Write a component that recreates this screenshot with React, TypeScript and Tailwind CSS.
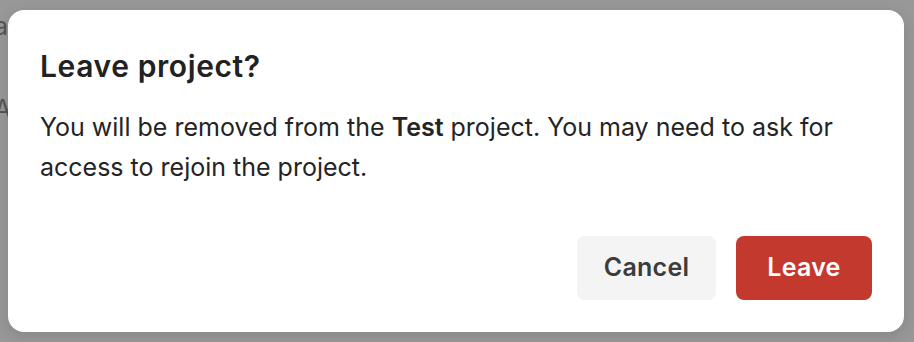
export default function App() {
  return (
    <div
      className="relative h-[342px] w-[914px] overflow-hidden bg-[#989898]"
      style={{ fontFamily: "Inter, 'Noto Sans', sans-serif" }}
    >
      {/* dimmed page behind the dialog */}
      <div className="absolute left-[-6px] top-[10px] flex flex-col gap-[51px] text-[25px] leading-[32px] text-[#555555]">
        <span>a</span>
        <span>A</span>
      </div>

      {/* dialog */}
      <div className="absolute left-2 top-[10px] flex h-[322px] w-[896px] flex-col rounded-[16px] bg-white px-8 pt-[38px] pb-8 shadow-[0_4px_16px_rgba(0,0,0,0.12)]">
        <h2 className="text-[30px] font-semibold leading-[36px] tracking-[0.02em] text-[#222222]">
          Leave project?
        </h2>
        <p className="mt-[23px] text-[25px] leading-[40px] text-[#242424]">
          You will be removed from the <span className="font-semibold">Test</span> project. You may need to ask for
          access to rejoin the project.
        </p>
        <div className="mt-auto flex justify-end gap-5">
          <button className="h-16 w-[139px] rounded-lg bg-[#f4f4f4] text-[25px] font-semibold tracking-[0.01em] text-[#3c3c3c]">
            Cancel
          </button>
          <button className="h-16 w-[136px] rounded-lg bg-[#c4392d] text-[25px] font-semibold tracking-[0.01em] text-white">
            Leave
          </button>
        </div>
      </div>
    </div>
  );
}
